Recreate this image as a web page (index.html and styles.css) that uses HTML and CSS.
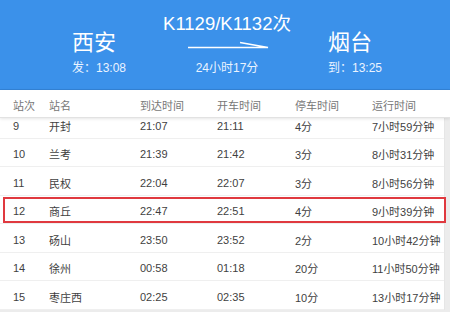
FILE: index.html
```html
<!DOCTYPE html>
<html lang="zh-CN">
<head>
<meta charset="utf-8">
<link rel="stylesheet" href="styles.css">
</head>
<body>
<div class="page">
  <header class="hero">
    <div class="station">
      <div class="city">西安</div>
      <div class="time">发：13:08</div>
    </div>
    <div class="train">
      <div class="code">K1129/K1132次</div>
      <svg class="arrow" width="82" height="10" viewBox="0 0 82 10">
        <path d="M0 6.5 H80 L52 1.5" fill="none" stroke="#fff" stroke-width="1.6" stroke-linejoin="miter"/>
      </svg>
      <div class="dur">24小时17分</div>
    </div>
    <div class="station">
      <div class="city">烟台</div>
      <div class="time">到：13:25</div>
    </div>
  </header>

  <div class="thead cols">
    <span>站次</span><span>站名</span><span>到达时间</span><span>开车时间</span><span>停车时间</span><span>运行时间</span>
  </div>

  <div class="tbody">
    <div class="row cols"><span>9</span><span>开封</span><span>21:07</span><span>21:11</span><span>4分</span><span>7小时59分钟</span></div>
    <div class="row cols"><span>10</span><span>兰考</span><span>21:39</span><span>21:42</span><span>3分</span><span>8小时31分钟</span></div>
    <div class="row cols"><span>11</span><span>民权</span><span>22:04</span><span>22:07</span><span>3分</span><span>8小时56分钟</span></div>
    <div class="row cols marked"><span>12</span><span>商丘</span><span>22:47</span><span>22:51</span><span>4分</span><span>9小时39分钟</span></div>
    <div class="row cols"><span>13</span><span>砀山</span><span>23:50</span><span>23:52</span><span>2分</span><span>10小时42分钟</span></div>
    <div class="row cols"><span>14</span><span>徐州</span><span>00:58</span><span>01:18</span><span>20分</span><span>11小时50分钟</span></div>
    <div class="row cols"><span>15</span><span>枣庄西</span><span>02:25</span><span>02:35</span><span>10分</span><span>13小时17分钟</span></div>
  </div>
</div>
</body>
</html>
```

FILE: styles.css
```css
* { box-sizing: border-box; }
html, body { margin: 0; padding: 0; }
body {
  width: 450px;
  height: 312px;
  overflow: hidden;
  background: #ececec;
  font-family: "Liberation Sans", "Noto Sans CJK SC", sans-serif;
}
.page {
  width: 450px;
  height: 312px;
  overflow: hidden;
  background: #ececec;
}
.hero {
  height: 90px;
  background: #3b91ea;
  border-bottom: 1px solid #3383d6;
  color: #fff;
  display: flex;
  justify-content: center;
  align-items: flex-end;
  gap: 34px;
  padding: 0 0 14px 4px;
}
.station {
  display: flex;
  flex-direction: column;
}
.city {
  font-size: 22px;
  line-height: 26px;
}
.time {
  font-size: 12px;
  line-height: 14px;
  margin-top: 5px;
  color: #eaf3ff;
}
.train {
  display: flex;
  flex-direction: column;
  align-items: center;
  width: 134px;
}
.code {
  font-size: 18.5px;
  line-height: 22px;
}
.arrow {
  display: block;
  margin-top: 6px;
  margin-left: 4px;
}
.dur {
  font-size: 12px;
  line-height: 14px;
  margin-top: 10px;
  color: #eaf3ff;
}
.cols {
  display: grid;
  grid-template-columns: 36px 91px 77px 78px 77px 1fr;
  padding-left: 13px;
  align-items: center;
  font-size: 11px;
}
.thead {
  position: relative;
  z-index: 1;
  height: 28px;
  background: #fff;
  color: #777;
  border-bottom: 1px solid #e2e2e2;
  box-shadow: 0 1px 3px rgba(0, 0, 0, 0.1);
  padding-top: 3px;
}
.tbody {
  margin-top: -8px;
  width: 445px;
  background: #fff;
  border-right: 1px solid #e6e6e6;
}
.row {
  position: relative;
  height: 28.5px;
  border-bottom: 1px solid #efefef;
  color: #3f3f3f;
  padding-top: 4px;
}
.marked::after {
  content: "";
  position: absolute;
  left: 3px;
  right: -2px;
  top: 1px;
  bottom: 0;
  border: 2px solid #e0393f;
}
```
